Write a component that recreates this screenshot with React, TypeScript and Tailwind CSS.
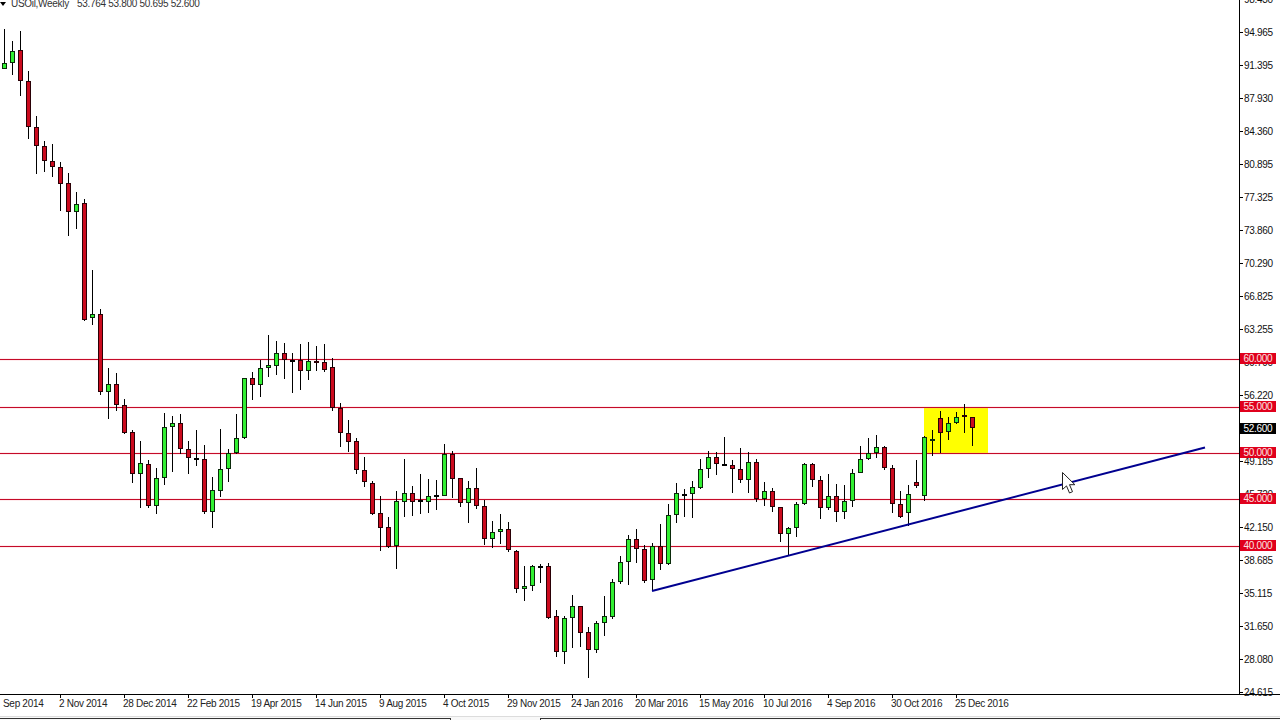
import React from 'react';

type Candle = [number, number, number, number, number, 'g' | 'r' | 'd'];

// x, high, body top, body bottom, low, kind
const candles: Candle[] = [
  [4, 29, 63, 69, 69, 'g'], [12, 41, 51, 63, 75, 'g'], [20, 31, 50, 81, 96, 'r'], [28, 71, 81, 127, 139, 'r'],
  [36, 116, 127, 146, 174, 'r'], [44, 141, 146, 161, 172, 'r'], [52, 144, 161, 167, 177, 'r'], [60, 162, 167, 184, 211, 'r'],
  [68, 173, 183, 212, 236, 'r'], [76, 192, 204, 212, 229, 'g'], [84, 199, 203, 320, 321, 'r'], [92, 270, 314, 318, 325, 'g'],
  [100, 309, 314, 392, 395, 'r'], [108, 368, 384, 392, 419, 'g'], [116, 373, 384, 405, 411, 'r'], [124, 399, 405, 433, 434, 'r'],
  [132, 430, 432, 474, 483, 'r'], [140, 441, 463, 474, 508, 'g'], [148, 460, 464, 506, 508, 'r'], [156, 468, 478, 506, 514, 'g'],
  [164, 413, 427, 478, 485, 'g'], [172, 416, 423, 427, 472, 'g'], [180, 414, 423, 449, 454, 'r'], [188, 441, 449, 458, 474, 'r'],
  [196, 430, 458, 459, 466, 'd'], [204, 445, 459, 512, 514, 'r'], [212, 477, 490, 512, 528, 'g'], [220, 429, 469, 491, 497, 'g'],
  [228, 449, 453, 469, 482, 'g'], [236, 414, 438, 453, 454, 'g'], [244, 378, 378, 438, 439, 'g'], [252, 372, 378, 385, 400, 'r'],
  [260, 360, 368, 385, 397, 'g'], [268, 335, 365, 368, 377, 'g'], [276, 341, 353, 366, 375, 'g'], [284, 343, 353, 360, 379, 'r'],
  [292, 353, 360, 360, 393, 'd'], [300, 344, 360, 371, 390, 'r'], [308, 342, 361, 371, 380, 'g'], [316, 346, 361, 363, 371, 'r'],
  [324, 344, 362, 370, 372, 'r'], [332, 358, 367, 408, 411, 'r'], [340, 403, 408, 433, 447, 'r'], [348, 420, 433, 442, 452, 'r'],
  [356, 438, 441, 470, 474, 'r'], [364, 457, 470, 482, 487, 'r'], [372, 481, 483, 514, 515, 'r'], [380, 496, 513, 528, 551, 'r'],
  [388, 517, 527, 547, 548, 'r'], [396, 491, 501, 546, 569, 'g'], [404, 459, 493, 502, 517, 'g'], [412, 486, 493, 502, 516, 'r'],
  [420, 474, 500, 501, 514, 'd'], [428, 479, 496, 502, 513, 'g'], [436, 480, 495, 497, 510, 'd'], [444, 444, 454, 496, 496, 'g'],
  [452, 451, 454, 479, 498, 'r'], [460, 478, 478, 503, 507, 'r'], [468, 481, 488, 503, 523, 'g'], [476, 468, 488, 506, 509, 'r'],
  [484, 500, 506, 539, 545, 'r'], [492, 521, 532, 539, 548, 'g'], [500, 514, 529, 532, 544, 'g'], [508, 522, 529, 550, 552, 'r'],
  [516, 550, 551, 589, 593, 'r'], [524, 566, 586, 589, 601, 'g'], [532, 565, 566, 586, 591, 'g'], [540, 564, 566, 566, 583, 'd'],
  [548, 563, 566, 618, 619, 'r'], [556, 610, 616, 652, 657, 'r'], [564, 616, 618, 652, 664, 'g'], [572, 595, 606, 618, 648, 'g'],
  [580, 606, 606, 633, 647, 'r'], [588, 627, 632, 650, 678, 'r'], [596, 621, 623, 650, 653, 'g'], [604, 596, 616, 623, 636, 'g'],
  [612, 579, 582, 617, 619, 'g'], [620, 556, 562, 582, 584, 'g'], [628, 535, 539, 562, 585, 'g'], [636, 529, 539, 549, 563, 'r'],
  [644, 545, 549, 581, 583, 'r'], [652, 543, 546, 580, 591, 'g'], [660, 524, 546, 564, 570, 'r'], [668, 504, 515, 564, 565, 'g'],
  [676, 483, 493, 515, 523, 'g'], [684, 489, 494, 494, 517, 'd'], [692, 481, 487, 494, 518, 'g'], [700, 459, 469, 488, 489, 'g'],
  [708, 451, 457, 469, 478, 'g'], [716, 452, 457, 464, 475, 'r'], [724, 437, 464, 465, 466, 'd'], [732, 460, 465, 469, 493, 'r'],
  [740, 448, 469, 480, 483, 'r'], [748, 452, 462, 480, 493, 'g'], [756, 459, 462, 499, 502, 'r'], [764, 482, 491, 499, 506, 'g'],
  [772, 488, 491, 507, 512, 'r'], [780, 507, 507, 534, 542, 'r'], [788, 527, 528, 534, 555, 'g'], [796, 502, 504, 528, 537, 'g'],
  [804, 463, 464, 504, 505, 'g'], [812, 463, 464, 480, 487, 'r'], [820, 476, 480, 508, 519, 'r'], [828, 474, 496, 508, 510, 'g'],
  [836, 484, 496, 512, 522, 'r'], [844, 485, 501, 512, 519, 'g'], [852, 469, 473, 501, 507, 'g'], [860, 446, 459, 473, 473, 'g'],
  [868, 438, 453, 459, 460, 'g'], [876, 435, 447, 453, 458, 'g'], [884, 446, 447, 468, 470, 'r'], [892, 465, 468, 504, 513, 'r'],
  [900, 491, 504, 517, 518, 'r'], [908, 485, 494, 513, 526, 'g'], [916, 460, 482, 486, 488, 'r'], [924, 436, 437, 496, 501, 'g'],
  [932, 430, 439, 441, 456, 'g'], [940, 411, 418, 433, 453, 'r'], [948, 417, 423, 432, 440, 'g'], [956, 412, 417, 423, 424, 'g'],
  [964, 404, 415, 417, 433, 'r'], [972, 417, 417, 428, 446, 'r'],
];

const levels = [
  { y: 359, label: '60.000' },
  { y: 407, label: '55.000' },
  { y: 453, label: '50.000' },
  { y: 499, label: '45.000' },
  { y: 546, label: '40.000' },
];

const prices: [number, string][] = [
  [-1, '98.430'], [32, '94.965'], [65, '91.395'], [98, '87.930'], [131, '84.360'], [164, '80.895'], [197, '77.325'],
  [230, '73.860'], [263, '70.290'], [296, '66.825'], [329, '63.255'], [362, '59.790'], [395, '56.220'],
  [461, '49.185'], [494, '45.720'], [527, '42.150'], [560, '38.685'], [593, '35.115'], [626, '31.650'], [659, '28.080'],
  [692, '24.615'],
];

const dates = [
  '2 Nov 2014', '28 Dec 2014', '22 Feb 2015', '19 Apr 2015', '14 Jun 2015', '9 Aug 2015', '4 Oct 2015', '29 Nov 2015',
  '24 Jan 2016', '20 Mar 2016', '15 May 2016', '10 Jul 2016', '4 Sep 2016', '30 Oct 2016', '25 Dec 2016',
];

const bodyFill = { g: '#32f032', r: '#cc0a1e', d: '#000000' };
const bodyStroke = { g: '#0a2a0a', r: '#2a0006', d: '#000000' };

const App: React.FC = () => {
  return (
    <div className="w-[1280px] h-[720px] overflow-hidden flex flex-col bg-white text-[10px] tracking-[-0.3px] leading-none text-[#111] font-['Liberation_Sans',sans-serif]">
      <div className="flex h-[694px]">
        <div className="relative w-[1239px]">
          <svg width="1239" height="694" className="block">
            <rect x="924" y="407" width="64" height="46" fill="#ffff00" />
            {levels.map((l) => (
              <g key={l.y}>
                <line x1="0" x2="1239" y1={l.y + 0.5} y2={l.y + 0.5} stroke="#ff9aa6" strokeWidth="3" opacity="0.18" />
                <line x1="0" x2="1239" y1={l.y + 0.5} y2={l.y + 0.5} stroke="#c40a28" strokeWidth="1" />
              </g>
            ))}
            {candles.map(([x, high, top, bottom, low, kind]) => (
              <g key={x}>
                <line x1={x + 0.5} x2={x + 0.5} y1={high} y2={low} stroke="#000" strokeWidth="1" />
                {kind === 'd' ? (
                  <rect x={x - 2} y={top} width="5" height={Math.max(bottom - top, 2)} fill="#000" />
                ) : (
                  <rect
                    x={x - 1.5}
                    y={top + 0.5}
                    width="4"
                    height={bottom - top - 1}
                    fill={bodyFill[kind]}
                    stroke={bodyStroke[kind]}
                    strokeWidth="1"
                  />
                )}
              </g>
            ))}
            <line x1="652" y1="591" x2="1205" y2="447.5" stroke="#000090" strokeWidth="2" />
            {/* mouse pointer */}
            <path d="M1062.5 472.5v17l4-3.6 3 7.1 3-1.3-3-7h5.4z" fill="#fff" stroke="#222" strokeWidth="1" />
          </svg>
          <div className="absolute left-0 top-0 flex items-center h-[7px] whitespace-nowrap">
            <span className="w-0 h-0 border-x-[3px] border-x-transparent border-t-[4px] border-t-black" />
            <span className="ml-[5px] text-[#333]">USOil,Weekly</span>
            <span className="ml-[8px] text-[#333]">53.764 53.800 50.695 52.600</span>
          </div>
        </div>
        <div className="relative w-[41px] border-l border-black">
          {prices.map(([y, p]) => (
            <div key={p} className="absolute left-0 flex items-center h-[11px]" style={{ top: y - 5 }}>
              <span className="w-[3px] h-px bg-black" />
              <span className="ml-[1px]">{p}</span>
            </div>
          ))}
          {levels.map((l) => (
            <div key={l.y} className="absolute left-0 w-[36px] h-[11px] bg-[#e0001c] text-[#fbe4e4] flex items-center justify-center" style={{ top: l.y - 6 }}>
              {l.label}
            </div>
          ))}
          <div className="absolute left-0 top-[423px] w-[36px] h-[11px] bg-black text-white flex items-center justify-center">52.600</div>
        </div>
      </div>
      <div className="flex h-[22px] border-t border-black pt-[4px] text-[#222]">
        <div className="w-[59px] pl-[3px]">Sep 2014</div>
        {dates.map((d) => (
          <div key={d} className="relative w-16">
            <span className="absolute left-[1px] -top-[4px] w-px h-[3px] bg-black" />
            {d}
          </div>
        ))}
      </div>
      <div className="flex h-[4px] bg-[#f8f8f8] border-t border-[#dcdcdc]">
        <div className="w-[450px] h-[2px] border-b border-[#333]" />
        <div className="w-[91px] mt-[1px] border-x border-[#333]" />
        <div className="flex-1 h-[2px] border-b border-[#333]" />
      </div>
    </div>
  );
};

export default App;
